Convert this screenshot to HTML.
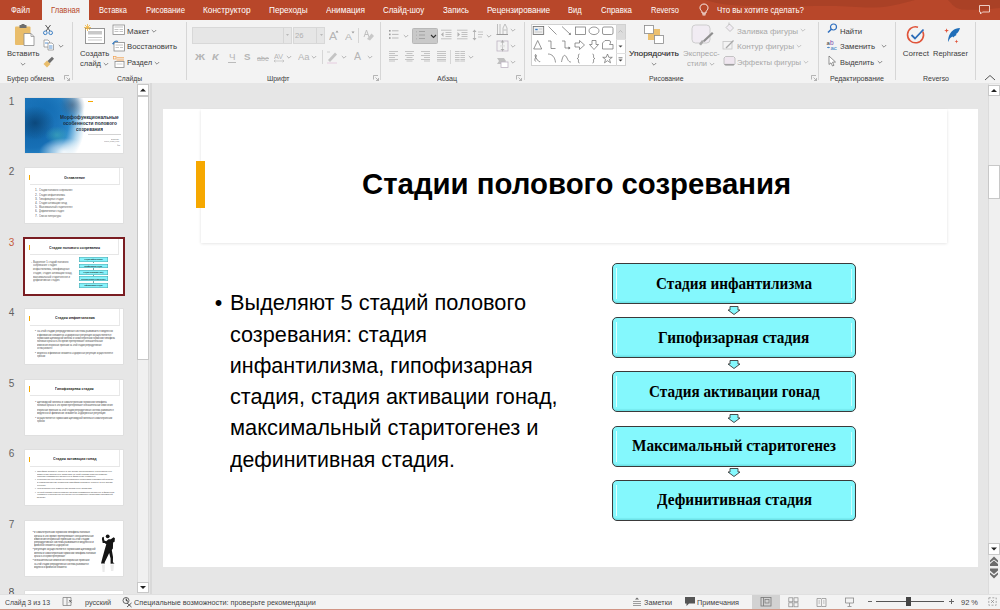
<!DOCTYPE html>
<html><head><meta charset="utf-8">
<style>
*{margin:0;padding:0;box-sizing:border-box}
html,body{width:1000px;height:610px;overflow:hidden;background:#e6e6e6;font-family:"Liberation Sans",sans-serif}
.a{position:absolute}
.t{position:absolute;white-space:pre;line-height:1;transform-origin:0 0}
svg{position:absolute;overflow:visible}
.sep{position:absolute;width:1px;background:#d6d6d6}
.thumb{position:absolute;left:25px;width:98px;height:55px;background:#fff;box-shadow:0 0 0 0.5px #d8d8d8}
.tn{position:absolute;left:8px;font-size:10.5px;color:#505050;line-height:1}
.box{position:absolute;left:612.3px;width:243.5px;height:41px;border:1.1px solid #3a3a3a;border-radius:5px;background:#84f8fd}
.box{box-shadow:inset 0 -1.5px 1px rgba(0,120,130,0.18)}
.box:before{content:"";position:absolute;left:3px;top:4px;width:1.2px;bottom:4px;background:#e0ffff}
.box:after{content:"";position:absolute;right:3px;top:5px;width:1px;bottom:5px;background:#c8ffff}
</style></head><body>
<!-- TAB BAR -->
<div class="a" style="left:0;top:0;width:1000px;height:20px;background:#b8472a"></div>
<svg style="left:0;top:0" width="1000" height="20"><path d="M705 0 C715 3 725 5 745 6 C770 7 800 6 830 6 C850 6 860 8 875 7.5 C890 7 900 4 915 0Z" fill="#8f3720" opacity="0.35"/><path d="M948 0 C952 4 955 9 962 9.5 C975 10.5 990 9 1000 8 V0Z" fill="#8f3720" opacity="0.35"/></svg>
<div class="a" style="left:42px;top:0;width:47px;height:20px;background:#f3f3f3"></div>
<!-- RIBBON -->
<div class="a" style="left:0;top:20px;width:1000px;height:63px;background:#f3f3f3"></div>
<div class="sep" style="left:72px;top:22px;height:58px"></div>
<div class="sep" style="left:186px;top:22px;height:58px"></div>
<div class="sep" style="left:380px;top:22px;height:58px"></div>
<div class="sep" style="left:524px;top:22px;height:58px"></div>
<div class="sep" style="left:818px;top:22px;height:58px"></div>
<div class="sep" style="left:895px;top:22px;height:58px"></div>
<div class="sep" style="left:975px;top:22px;height:58px"></div>
<svg style="left:699px;top:3px" width="10" height="12" viewBox="0 0 10 12"><path d="M5 1 C2.6 1 1 2.8 1 4.8 C1 6.4 2 7.3 2.8 8.2 L3 10 H7 L7.2 8.2 C8 7.3 9 6.4 9 4.8 C9 2.8 7.4 1 5 1Z" fill="none" stroke="#fff" stroke-width="0.9"/><path d="M3.2 11 H6.8 M3.6 12 H6.4" stroke="#fff" stroke-width="0.8"/></svg>
<svg style="left:978px;top:4px" width="13" height="11" viewBox="0 0 13 11"><path d="M1.5 1.5 H11.5 V8 H4.5 L2.5 10 V8 H1.5Z" fill="none" stroke="#f4dcd5" stroke-width="0.9"/></svg>
<svg style="left:14px;top:24px" width="22" height="23" viewBox="0 0 22 23"><rect x="1" y="2.5" width="15.5" height="18.5" rx="1" fill="#e9bd6b"/><rect x="5.5" y="1" width="7" height="3" rx="0.6" fill="#6e6e6e"/><rect x="7.5" y="0" width="3" height="2" fill="#6e6e6e"/><path d="M10 9.5 H17 L20 12.5 V21.5 H10Z" fill="#fff" stroke="#8a8a8a" stroke-width="0.8"/><path d="M17 9.5 V12.5 H20" fill="none" stroke="#8a8a8a" stroke-width="0.7"/></svg>
<svg style="left:20px;top:62px" width="6" height="4"><path d="M0.8 1 L3 3.2 L5.2 1" fill="none" stroke="#777" stroke-width="0.85"/></svg>
<svg style="left:42px;top:24px" width="12" height="12" viewBox="0 0 12 12"><path d="M3.5 1 L8 7 M8.5 1 L4 7" stroke="#555" stroke-width="1"/><circle cx="3.3" cy="8.8" r="1.8" fill="none" stroke="#3b7fc4" stroke-width="1"/><circle cx="8.7" cy="8.8" r="1.8" fill="none" stroke="#3b7fc4" stroke-width="1"/></svg>
<svg style="left:43px;top:39px" width="12" height="12" viewBox="0 0 12 12"><path d="M1 1 H5 L6.5 2.5 V8 H1Z" fill="#fff" stroke="#888" stroke-width="0.7"/><path d="M5 4 H9 L10.5 5.5 V11 H5Z" fill="#fff" stroke="#888" stroke-width="0.7"/><path d="M2 4 H5 M6 7 H9.5 M6 9 H9.5" stroke="#4a8ad0" stroke-width="0.9"/></svg>
<svg style="left:58px;top:44px" width="6" height="4"><path d="M0.8 1 L3 3.2 L5.2 1" fill="none" stroke="#777" stroke-width="0.85"/></svg>
<svg style="left:42px;top:56px" width="13" height="12" viewBox="0 0 13 12"><path d="M1.5 8 L5 4.5 L8.5 8 L5 11.5Z" fill="#e9bd6b"/><path d="M5.5 5 L10 0.8 L12 2.8 L7.8 7.3Z" fill="#6e6e6e"/></svg>
<svg style="left:64px;top:75px" width="7" height="6" viewBox="0 0 7 6"><path d="M0.5 4.5 V0.5 H5" fill="none" stroke="#999" stroke-width="0.7"/><path d="M2.5 2.5 L5.5 5.5 M5.5 3 V5.5 H3" fill="none" stroke="#999" stroke-width="0.7"/></svg>
<svg style="left:373px;top:75px" width="7" height="6" viewBox="0 0 7 6"><path d="M0.5 4.5 V0.5 H5" fill="none" stroke="#999" stroke-width="0.7"/><path d="M2.5 2.5 L5.5 5.5 M5.5 3 V5.5 H3" fill="none" stroke="#999" stroke-width="0.7"/></svg>
<svg style="left:516px;top:75px" width="7" height="6" viewBox="0 0 7 6"><path d="M0.5 4.5 V0.5 H5" fill="none" stroke="#999" stroke-width="0.7"/><path d="M2.5 2.5 L5.5 5.5 M5.5 3 V5.5 H3" fill="none" stroke="#999" stroke-width="0.7"/></svg>
<svg style="left:811px;top:75px" width="7" height="6" viewBox="0 0 7 6"><path d="M0.5 4.5 V0.5 H5" fill="none" stroke="#999" stroke-width="0.7"/><path d="M2.5 2.5 L5.5 5.5 M5.5 3 V5.5 H3" fill="none" stroke="#999" stroke-width="0.7"/></svg>
<svg style="left:83px;top:23px" width="23" height="21" viewBox="0 0 23 21"><rect x="2.5" y="5.5" width="19" height="15" fill="#fff" stroke="#8a8a8a" stroke-width="0.9"/><rect x="5" y="8" width="14" height="3.5" fill="#c8c8c8"/><path d="M5 14.5 H19 M5 17 H19" stroke="#bbb" stroke-width="0.8"/><path d="M4.5 1 V8 M1 4.5 H8 M2 2 L7 7 M7 2 L2 7" stroke="#f0b43c" stroke-width="0.8"/></svg>
<svg style="left:103px;top:62px" width="6" height="4"><path d="M0.8 1 L3 3.2 L5.2 1" fill="none" stroke="#777" stroke-width="0.85"/></svg>
<svg style="left:112px;top:24px" width="14" height="12" viewBox="0 0 14 12"><rect x="1" y="1" width="11.5" height="9.5" fill="#fff" stroke="#8a8a8a" stroke-width="0.8"/><path d="M2.5 3 H11 M2.5 5.5 H6.5 M7.5 5.5 H11 M2.5 7.5 H6.5 M7.5 7.5 H11" stroke="#c4c4c4" stroke-width="1"/></svg>
<svg style="left:112px;top:40px" width="14" height="12" viewBox="0 0 14 12"><rect x="2" y="2.5" width="10.5" height="8.5" fill="#fff" stroke="#8a8a8a" stroke-width="0.8"/><path d="M3.5 5 H11 M3.5 7.5 H7 M8 7.5 H11" stroke="#c4c4c4" stroke-width="1"/><path d="M1 4 C1.5 1.5 4 0.5 6 1.5" fill="none" stroke="#3b7fc4" stroke-width="1.1"/><path d="M0 3 L1.2 5 L2.6 3Z" fill="#3b7fc4"/></svg>
<svg style="left:113px;top:56px" width="13" height="12" viewBox="0 0 13 12"><rect x="0.5" y="0.5" width="2.5" height="2.5" fill="none" stroke="#f0a050" stroke-width="0.7"/><path d="M3.5 1.8 H11 M3.5 4 H11" stroke="#f0a050" stroke-width="0.9"/><rect x="2" y="5.5" width="9" height="6" fill="#fff" stroke="#8a8a8a" stroke-width="0.8"/><path d="M3.5 8 H9.5" stroke="#c4c4c4" stroke-width="0.8"/></svg>
<svg style="left:151px;top:29px" width="6" height="4"><path d="M0.8 1 L3 3.2 L5.2 1" fill="none" stroke="#777" stroke-width="0.85"/></svg>
<svg style="left:154px;top:61px" width="6" height="4"><path d="M0.8 1 L3 3.2 L5.2 1" fill="none" stroke="#777" stroke-width="0.85"/></svg>
<div class="a" style="left:192px;top:27px;width:99.5px;height:16.5px;background:#e6e6e6;border:1px solid #d8d8d8"></div>
<div class="a" style="left:283px;top:28px;width:1px;height:14.5px;background:#d6d6d6"></div>
<div class="a" style="left:293px;top:27px;width:31.5px;height:16.5px;background:#e6e6e6;border:1px solid #d8d8d8"></div>
<div class="a" style="left:316px;top:28px;width:1px;height:14.5px;background:#d6d6d6"></div>
<svg style="left:285px;top:33px" width="5" height="4" viewBox="0 0 5 4"><path d="M1 1.2 L2.5 2.8 L4 1.2Z" fill="#aaa"/></svg>
<svg style="left:318.5px;top:33px" width="5" height="4" viewBox="0 0 5 4"><path d="M1 1.2 L2.5 2.8 L4 1.2Z" fill="#aaa"/></svg>
<svg style="left:335px;top:30px" width="4" height="3" viewBox="0 0 4 3"><path d="M0.5 2.5 L2 0.5 L3.5 2.5Z" fill="#999"/></svg>
<svg style="left:350.5px;top:30.5px" width="4" height="3" viewBox="0 0 4 3"><path d="M0.5 0.5 L2 2.5 L3.5 0.5Z" fill="#999"/></svg>
<div class="sep" style="left:358px;top:28px;height:15px"></div>
<svg style="left:363px;top:29px" width="11" height="12" viewBox="0 0 11 12"><path d="M1 8 L3.5 1 L6 8 M2 5.5 H5" fill="none" stroke="#bbb" stroke-width="0.9"/><path d="M4 10 L8.5 4.5 L11 7 L7 11.5Z" fill="#c8c8c8"/></svg>
<div class="a" style="left:228px;top:62px;width:8px;height:0.8px;background:#bbb"></div>
<div class="a" style="left:256.5px;top:57.5px;width:12px;height:0.8px;background:#bbb"></div>
<svg style="left:273px;top:59px" width="12" height="4" viewBox="0 0 12 4"><path d="M1 2 H11 M1 2 L2.5 0.8 M1 2 L2.5 3.2 M11 2 L9.5 0.8 M11 2 L9.5 3.2" fill="none" stroke="#bbb" stroke-width="0.7"/></svg>
<svg style="left:286px;top:55px" width="6" height="4"><path d="M0.8 1 L3 3.2 L5.2 1" fill="none" stroke="#aaa" stroke-width="0.85"/></svg>
<svg style="left:311px;top:55px" width="6" height="4"><path d="M0.8 1 L3 3.2 L5.2 1" fill="none" stroke="#aaa" stroke-width="0.85"/></svg>
<div class="sep" style="left:322px;top:50px;height:14px"></div>
<svg style="left:326px;top:51px" width="12" height="13" viewBox="0 0 12 13"><path d="M1 1 H4" stroke="#bbb" stroke-width="0.6"/><path d="M2 9 L9 1.5 L11 3.5 L4 11Z" fill="#c4c4c4"/><path d="M1 12 H11" stroke="#e6cde0" stroke-width="1"/></svg>
<svg style="left:341px;top:55px" width="6" height="4"><path d="M0.8 1 L3 3.2 L5.2 1" fill="none" stroke="#aaa" stroke-width="0.85"/></svg>
<svg style="left:367px;top:55px" width="6" height="4"><path d="M0.8 1 L3 3.2 L5.2 1" fill="none" stroke="#aaa" stroke-width="0.85"/></svg>
<svg style="left:388px;top:29px" width="12" height="11" viewBox="0 0 12 11"><rect x="1" y="1" width="1.6" height="1.6" fill="#999"/><rect x="1" y="4.6" width="1.6" height="1.6" fill="#999"/><rect x="1" y="8.2" width="1.6" height="1.6" fill="#999"/><path d="M4 1.8 H10.5 M4 5.4 H10.5 M4 9 H10.5" stroke="#aaa" stroke-width="0.8"/></svg>
<svg style="left:403px;top:34px" width="6" height="4"><path d="M0.8 1 L3 3.2 L5.2 1" fill="none" stroke="#aaa" stroke-width="0.85"/></svg>
<div class="a" style="left:412.3px;top:28px;width:25.4px;height:15.8px;background:#c9c9c9;border:1px solid #b8b8b8;border-radius:1.5px"></div>
<svg style="left:415px;top:29px" width="12" height="12" viewBox="0 0 12 12"><path d="M1.5 2 V3.5 M1.5 5.5 V7 M1.5 9 V10.5" stroke="#aaa" stroke-width="0.6"/><path d="M4 2.5 H10 M4 6 H10 M4 9.5 H10" stroke="#999" stroke-width="0.8"/></svg>
<svg style="left:429.5px;top:34px" width="7" height="5" viewBox="0 0 7 5"><path d="M1 1 L3.5 3.5 L6 1" fill="none" stroke="#333" stroke-width="1.1"/></svg>
<svg style="left:440px;top:29px" width="13" height="12" viewBox="0 0 13 12"><path d="M1 1.2 H11.5 M5.5 3.5 H11.5 M5.5 5.5 H11.5 M5.5 7.5 H11.5 M1 9.8 H11.5" stroke="#b4b4b4" stroke-width="0.8"/><path d="M1 5.5 L3.5 3 V8Z" fill="#b0b0b0"/></svg>
<svg style="left:456px;top:29px" width="13" height="12" viewBox="0 0 13 12"><path d="M1 1.2 H11.5 M5.5 3.5 H11.5 M5.5 5.5 H11.5 M5.5 7.5 H11.5 M1 9.8 H11.5" stroke="#b4b4b4" stroke-width="0.8"/><path d="M4 5.5 L1.5 3 V8Z" fill="#b0b0b0"/></svg>
<svg style="left:472px;top:29px" width="13" height="12" viewBox="0 0 13 12"><path d="M2.5 2 V10" stroke="#b0b0b0" stroke-width="0.8"/><path d="M0.5 3 L2.5 0.5 L4.5 3Z M0.5 9 L2.5 11.5 L4.5 9Z" fill="#b0b0b0"/><path d="M6 3 H11 M6 5.5 H11 M6 8 H10" stroke="#b4b4b4" stroke-width="0.7"/></svg>
<svg style="left:486px;top:34px" width="6" height="4"><path d="M0.8 1 L3 3.2 L5.2 1" fill="none" stroke="#aaa" stroke-width="0.85"/></svg>
<svg style="left:496px;top:23px" width="13" height="13" viewBox="0 0 13 13"><path d="M1.5 1 V12 M4 1 V12 M7 12 V5 L9 1 L11 5 V12 M7.5 7 H10.5" fill="none" stroke="#b0b0b0" stroke-width="0.8"/><path d="M0.5 11.5 H12" stroke="#999" stroke-width="1"/></svg>
<svg style="left:510px;top:28px" width="6" height="4"><path d="M0.8 1 L3 3.2 L5.2 1" fill="none" stroke="#aaa" stroke-width="0.85"/></svg>
<svg style="left:496px;top:40px" width="13" height="12" viewBox="0 0 13 12"><rect x="1" y="1" width="11" height="10" fill="none" stroke="#bdb3c2" stroke-width="0.8"/><path d="M6.5 0 V11.5" stroke="#aaa" stroke-width="0.6"/><path d="M4.5 2.5 L6.5 0.5 L8.5 2.5Z M4.5 9 L6.5 11 L8.5 9Z" fill="#aaa"/><path d="M4 5.5 H9 M4 6.7 H9" stroke="#ddd" stroke-width="0.7"/></svg>
<svg style="left:510px;top:44px" width="6" height="4"><path d="M0.8 1 L3 3.2 L5.2 1" fill="none" stroke="#aaa" stroke-width="0.85"/></svg>
<svg style="left:496px;top:57px" width="13" height="11" viewBox="0 0 13 11"><path d="M1 1 H8 L10 4 L8 7 H1 L3 4Z" fill="#c0c0c0"/><rect x="5" y="5" width="7" height="5.5" fill="#fff" stroke="#bdb3c2" stroke-width="0.8"/></svg>
<svg style="left:510px;top:60px" width="6" height="4"><path d="M0.8 1 L3 3.2 L5.2 1" fill="none" stroke="#aaa" stroke-width="0.85"/></svg>
<svg style="left:388px;top:50px" width="11" height="12" viewBox="0 0 11 12"><path d="M1 1.5 H10 M1 3.5 H7 M1 5.5 H10 M1 7.5 H7 M1 9.5 H10 M1 11 H7" stroke="#b8b8b8" stroke-width="0.8"/></svg>
<svg style="left:404px;top:50px" width="11" height="12" viewBox="0 0 11 12"><path d="M1 1.5 H10 M2.5 3.5 H8.5 M1 5.5 H10 M2.5 7.5 H8.5 M1 9.5 H10 M2.5 11 H8.5" stroke="#b8b8b8" stroke-width="0.8"/></svg>
<svg style="left:420px;top:50px" width="11" height="12" viewBox="0 0 11 12"><path d="M1 1.5 H10 M4 3.5 H10 M1 5.5 H10 M4 7.5 H10 M1 9.5 H10 M4 11 H10" stroke="#b8b8b8" stroke-width="0.8"/></svg>
<svg style="left:435.5px;top:50px" width="11" height="12" viewBox="0 0 11 12"><path d="M1 1.5 H10 M1 3.5 H10 M1 5.5 H10 M1 7.5 H10 M1 9.5 H10 M1 11 H10" stroke="#b8b8b8" stroke-width="0.8"/></svg>
<div class="sep" style="left:450px;top:50px;height:14px"></div>
<svg style="left:454px;top:50px" width="12" height="12" viewBox="0 0 12 12"><path d="M1 1.5 H11 M1 3.5 H11 M1 5.5 H11 M1 7.5 H11 M1 9.5 H11 M1 11 H11" stroke="#b8b8b8" stroke-width="0.8"/><path d="M6 1 V11.5" stroke="#f3f3f3" stroke-width="0.8"/></svg>
<svg style="left:468px;top:55px" width="6" height="4"><path d="M0.8 1 L3 3.2 L5.2 1" fill="none" stroke="#aaa" stroke-width="0.85"/></svg>
<div class="a" style="left:530.5px;top:23.5px;width:95.5px;height:42.5px;background:#fff;border:1px solid #d0d0d0"></div>
<div class="a" style="left:615.5px;top:24.5px;width:9.5px;height:14px;background:#dcdcdc"></div>
<div class="a" style="left:615.5px;top:24px;width:1px;height:41.5px;background:#d6d6d6"></div>
<div class="a" style="left:616px;top:38.5px;width:9.5px;height:1px;background:#e0e0e0"></div>
<div class="a" style="left:616px;top:52.5px;width:9.5px;height:1px;background:#e0e0e0"></div>
<svg style="left:617px;top:29px" width="7" height="5" viewBox="0 0 7 5"><path d="M1.5 3.5 L3.5 1.5 L5.5 3.5" fill="none" stroke="#aaa" stroke-width="0.6"/></svg>
<svg style="left:617px;top:44px" width="7" height="5" viewBox="0 0 7 5"><path d="M1.5 1.5 L3.5 3.5 L5.5 1.5Z" fill="#444"/></svg>
<svg style="left:617px;top:57px" width="7" height="6" viewBox="0 0 7 6"><path d="M1.5 0.8 H5.5" stroke="#444" stroke-width="0.7"/><path d="M1.5 2.5 L3.5 4.5 L5.5 2.5Z" fill="#444"/></svg>
<svg style="left:532px;top:25px" width="92" height="40" viewBox="0 0 92 40">
<g transform="translate(-0.8,0)"><rect x="2" y="1.5" width="10.5" height="8" fill="#f0f0f0" stroke="#6a6a6a" stroke-width="0.8"/><path d="M4 4.5 H6.5" stroke="#3b7fc4" stroke-width="1.4"/><path d="M7.5 4 H11 M3.5 7 H11" stroke="#bbb" stroke-width="0.8"/></g>
<g transform="translate(0,0)"><path d="M16.5 1.5 L24.5 9.5" stroke="#6a6a6a" stroke-width="0.7"/></g>
<g transform="translate(0,0)"><path d="M30 1.5 L38.5 9.5" stroke="#6a6a6a" stroke-width="0.7"/><path d="M36.5 9.8 L38.8 9.8 L38.5 7.6Z" fill="#6a6a6a"/></g>
<g transform="translate(-1.5,0)"><rect x="45" y="2" width="10" height="7.5" fill="none" stroke="#6a6a6a" stroke-width="0.7"/></g>
<g transform="translate(-1.5,0)"><ellipse cx="63.5" cy="5.8" rx="5" ry="3.8" fill="none" stroke="#6a6a6a" stroke-width="0.7"/></g>
<g transform="translate(-1.5,0)"><rect x="72" y="2" width="10.5" height="7.5" rx="1.5" fill="none" stroke="#6a6a6a" stroke-width="0.7"/></g>
<g transform="translate(-0.8,1)"><path d="M6.5 14.5 L10.5 23 H2.5Z" fill="none" stroke="#6a6a6a" stroke-width="0.7"/></g>
<g transform="translate(0,1)"><path d="M16 15 H19 V22.5 H23.5" fill="none" stroke="#6a6a6a" stroke-width="0.7"/></g>
<g transform="translate(0,1)"><path d="M30 15 H33 V22 H37.5" fill="none" stroke="#6a6a6a" stroke-width="0.7"/><path d="M36.5 20.5 L38.5 22 L36.5 23.5Z" fill="#6a6a6a"/></g>
<g transform="translate(-1.5,1)"><path d="M44.5 17 H49 V14.5 L54 19 L49 23.5 V21 H44.5Z" fill="none" stroke="#6a6a6a" stroke-width="0.7"/></g>
<g transform="translate(-1.5,1)"><path d="M61.5 14.5 H65.5 V18.5 H68 L63.5 23.5 L59 18.5 H61.5Z" fill="none" stroke="#6a6a6a" stroke-width="0.7"/></g>
<g transform="translate(-1.5,1)"><path d="M72 17 L74.5 14.5 H78.5 C80.5 14.5 80.5 17 79 18.5 H82.5 V23 H72Z" fill="none" stroke="#6a6a6a" stroke-width="0.7"/></g>
<g transform="translate(-0.8,1)"><path d="M4.5 35.5 C2 33 6 31 5 29 C4 27.5 3 30 5.5 33 C7 35 8 36 9 35.5" fill="none" stroke="#6a6a6a" stroke-width="0.8"/></g>
<g transform="translate(0,1)"><path d="M16 28 C20 28 23 31 23.5 36.5" fill="none" stroke="#6a6a6a" stroke-width="0.7"/></g>
<g transform="translate(0,1)"><path d="M29.5 36 C31 28 33 28 35 32 C36.5 35.5 37.5 36 39 36" fill="none" stroke="#6a6a6a" stroke-width="0.7"/></g>
<g transform="translate(-1.5,1)"><path d="M49 28 C47.5 28 48 30 48 31 C48 32 47 32.5 46.5 32.5 C47 32.5 48 33 48 34 C48 35 47.5 37 49 37" fill="none" stroke="#6a6a6a" stroke-width="0.7"/></g>
<g transform="translate(-1.5,1)"><path d="M62 28 C63.5 28 63 30 63 31 C63 32 64 32.5 64.5 32.5 C64 32.5 63 33 63 34 C63 35 63.5 37 62 37" fill="none" stroke="#6a6a6a" stroke-width="0.7"/></g>
<g transform="translate(-1.5,1)"><path d="M77 28 L78.3 31.3 L81.8 31.3 L79 33.4 L80 36.8 L77 34.7 L74 36.8 L75 33.4 L72.2 31.3 L75.7 31.3Z" fill="none" stroke="#6a6a6a" stroke-width="0.7"/></g>
</svg>
<svg style="left:643px;top:24px" width="22" height="21" viewBox="0 0 22 21"><rect x="5" y="5" width="12" height="11" fill="#ecc06f"/><rect x="1.5" y="1.5" width="9" height="8" fill="#fff" stroke="#8a8a8a" stroke-width="0.8"/><rect x="11.5" y="11.5" width="9" height="8" fill="#fff" stroke="#8a8a8a" stroke-width="0.8"/></svg>
<svg style="left:651px;top:62px" width="6" height="4"><path d="M0.8 1 L3 3.2 L5.2 1" fill="none" stroke="#777" stroke-width="0.85"/></svg>
<svg style="left:690px;top:24px" width="25" height="22" viewBox="0 0 25 22"><rect x="2" y="1" width="18" height="18" rx="3.5" fill="#f1ecf3" stroke="#c9c9c9" stroke-width="0.9"/><path d="M9 20 L12 16 L14 17.5 L11 21.5Z" fill="#a8a8a8"/><path d="M13 16.5 L22 8 L23.5 9.5 L14.5 18Z" fill="#8e8e8e"/></svg>
<svg style="left:709px;top:62px" width="6" height="4"><path d="M0.8 1 L3 3.2 L5.2 1" fill="none" stroke="#aaa" stroke-width="0.85"/></svg>
<svg style="left:724px;top:22px" width="12" height="11" viewBox="0 0 12 11"><path d="M2 5.5 L5.5 2 L9.5 6 L6 9.5Z" fill="#f1ecf3" stroke="#b8b8b8" stroke-width="0.8"/><path d="M5 0.5 V3" stroke="#b8b8b8" stroke-width="0.8"/></svg>
<svg style="left:722px;top:39px" width="13" height="11" viewBox="0 0 13 11"><rect x="1" y="2.5" width="9" height="7.5" fill="none" stroke="#c4c4c4" stroke-width="0.8"/><path d="M4 9 L11.5 1.5" stroke="#a8a8a8" stroke-width="1.3"/></svg>
<svg style="left:723px;top:55px" width="13" height="11" viewBox="0 0 13 11"><path d="M2.5 1.5 H10.5 L12 3 V9 L10.5 10.5 H2.5 L1 9 V3Z" fill="#efe6ef" stroke="#b8b8b8" stroke-width="0.8"/><path d="M1.5 9.5 H11" stroke="#a0a0a0" stroke-width="1.2"/></svg>
<svg style="left:800px;top:28px" width="6" height="4"><path d="M0.8 1 L3 3.2 L5.2 1" fill="none" stroke="#bbb" stroke-width="0.85"/></svg>
<svg style="left:796px;top:44px" width="6" height="4"><path d="M0.8 1 L3 3.2 L5.2 1" fill="none" stroke="#bbb" stroke-width="0.85"/></svg>
<svg style="left:803px;top:60px" width="6" height="4"><path d="M0.8 1 L3 3.2 L5.2 1" fill="none" stroke="#bbb" stroke-width="0.85"/></svg>
<svg style="left:827px;top:23px" width="11" height="11" viewBox="0 0 11 11"><circle cx="6.5" cy="4" r="3" fill="none" stroke="#2f6fbf" stroke-width="1.2"/><path d="M4.3 6.2 L1 9.5" stroke="#2f6fbf" stroke-width="1.5"/></svg>
<svg style="left:826px;top:39px" width="12" height="12" viewBox="0 0 12 12"><text x="0.5" y="5.5" font-size="6" font-family="Liberation Sans" fill="#333">a</text><text x="4" y="5.5" font-size="6.5" font-family="Liberation Sans" fill="#7a4fb0">b</text><text x="4.5" y="11" font-size="6" font-family="Liberation Sans" fill="#3b7fc4">ac</text><path d="M1 8.5 L3.5 8.5" stroke="#3b7fc4" stroke-width="0.8"/><path d="M2.5 7.5 L3.8 8.5 L2.5 9.5Z" fill="#3b7fc4"/></svg>
<svg style="left:881px;top:44px" width="6" height="4"><path d="M0.8 1 L3 3.2 L5.2 1" fill="none" stroke="#777" stroke-width="0.85"/></svg>
<svg style="left:828px;top:55px" width="9" height="12" viewBox="0 0 9 12"><path d="M1 1 L1 9.5 L3 7.8 L4.5 11 L6 10.3 L4.5 7.2 L7.5 7Z" fill="#fff" stroke="#666" stroke-width="0.7"/></svg>
<svg style="left:877px;top:60px" width="6" height="4"><path d="M0.8 1 L3 3.2 L5.2 1" fill="none" stroke="#777" stroke-width="0.85"/></svg>
<svg style="left:906px;top:25px" width="21" height="20" viewBox="0 0 21 20"><path d="M16.8 6.5 A8 8 0 1 1 12 2.2" fill="none" stroke="#e0543a" stroke-width="1.6"/><path d="M5.5 10 L9 13.5 L17.5 4.5" fill="none" stroke="#2b6cb8" stroke-width="1.8"/></svg>
<svg style="left:943px;top:26px" width="20" height="19" viewBox="0 0 20 19"><path d="M17 2 C11 2 7 6 5.5 11.5 C5 13.5 5 15 5.3 16 C6 13 8 11 9.5 10.5 L10.3 11.5 C11.5 10 12.5 9.5 13.5 9 L13 8 C15 7 16.5 4.5 17 2Z" fill="#1f6eb9"/><path d="M3 4 L3.6 2.2 L4.2 4 L6 4.6 L4.2 5.2 L3.6 7 L3 5.2 L1.2 4.6Z" fill="#e0543a"/><path d="M13 15 L13.5 13.6 L14 15 L15.4 15.5 L14 16 L13.5 17.4 L13 16 L11.6 15.5Z" fill="#e0543a"/></svg>
<svg style="left:984px;top:74px" width="12" height="7" viewBox="0 0 12 7"><path d="M1 6 L6 1.5 L11 6" fill="none" stroke="#555" stroke-width="1"/></svg>
<!-- MAIN -->
<div class="a" style="left:150px;top:83px;width:2px;height:511px;background:#d9d9d9"></div>
<!-- thumbs scrollbar -->
<div class="a" style="left:137px;top:84px;width:11.5px;height:509px;background:#f0f0f0;border-left:1px solid #dcdcdc;border-right:1px solid #dcdcdc"></div>
<div class="a" style="left:137px;top:84px;width:11.5px;height:12px;background:#fff;border:1px solid #c8c8c8"></div>
<svg style="left:137px;top:84px" width="12" height="12"><path d="M3 7.5 L6 4.5 L9 7.5Z" fill="#222"/></svg>
<div class="a" style="left:137px;top:96px;width:11.5px;height:264px;background:#fff;border:1px solid #c8c8c8"></div>
<div class="a" style="left:137px;top:582px;width:11.5px;height:11px;background:#fff;border:1px solid #c8c8c8"></div>
<svg style="left:137px;top:582px" width="12" height="11"><path d="M3 4 L6 7 L9 4Z" fill="#222"/></svg>
<div class="thumb" style="top:97.50px;height:55.00px"></div>
<div class="thumb" style="top:168.00px;height:55.00px"></div>
<div class="thumb" style="top:238.50px;height:55.00px"></div>
<div class="thumb" style="top:309.00px;height:55.00px"></div>
<div class="thumb" style="top:379.50px;height:55.00px"></div>
<div class="thumb" style="top:450.00px;height:55.00px"></div>
<div class="thumb" style="top:520.50px;height:55.00px"></div>
<div class="thumb" style="top:591.00px;height:3.00px"></div>
<div class="a" style="left:8.6px;top:586px;width:10px;height:8px;overflow:hidden"><div class="t" style="left:0;top:1px;font-size:10.5px;color:#555">8</div></div>
<div class="a" style="left:25px;top:97.5px;width:98px;height:55px;overflow:hidden">
<div class="a" style="left:-45px;top:-30px;width:105px;height:110px;background:radial-gradient(ellipse 50% 50% at 50% 50%,#0e62a6 0%,#176fb5 45%,#2c8acb 68%,rgba(120,185,225,0.6) 86%,rgba(255,255,255,0) 100%)"></div>
<div class="a" style="left:-20px;top:-20px;width:80px;height:60px;background:radial-gradient(ellipse 50% 50% at 50% 50%,rgba(20,110,180,0.9) 0%,rgba(30,120,190,0.6) 60%,rgba(255,255,255,0) 100%)"></div>
<div class="a" style="left:-10px;top:8px;width:40px;height:34px;background:radial-gradient(ellipse 50% 50% at 50% 50%,rgba(6,55,100,0.7) 0%,rgba(6,55,100,0) 100%)"></div>
<div class="a" style="left:20px;top:28px;width:24px;height:18px;background:radial-gradient(ellipse 50% 50% at 50% 50%,rgba(60,165,185,0.75) 0%,rgba(60,165,185,0) 100%)"></div>
<div class="a" style="left:34px;top:-6px;width:26px;height:26px;background:radial-gradient(ellipse 50% 50% at 50% 50%,rgba(70,80,100,0.5) 0%,rgba(70,80,100,0) 100%)"></div>
<div class="a" style="left:14px;top:40px;width:50px;height:28px;background:radial-gradient(ellipse 50% 50% at 50% 50%,rgba(255,255,255,0.9) 0%,rgba(255,255,255,0.5) 50%,rgba(255,255,255,0) 100%)"></div>
</div>
<div class="a" style="left:88px;top:100.8px;width:4.5px;height:1px;background:#f6a800"></div>
<div class="a" style="left:87.7px;top:134.1px;width:33px;height:1.3px;background:#d3d3d3"></div>
<div class="a" style="left:29.5px;top:168.00px;width:90px;height:16.5px;border-right:0.6px solid #e8e8e8;border-bottom:0.6px solid #e6e6e6"></div>
<div class="a" style="left:29.2px;top:174.60px;width:1.2px;height:5.5px;background:#f6a800"></div>
<div class="a" style="left:23px;top:236.5px;width:102px;height:59px;border:2px solid #7a1d22"></div>
<div class="a" style="left:29.50px;top:238.50px;width:89.58px;height:16.08px;border-right:0.6px solid #e8e8e8;border-bottom:0.6px solid #e6e6e6"></div>
<div class="a" style="left:28.96px;top:244.74px;width:1.1px;height:5.64px;background:#f6a800"></div>
<div class="a" style="left:78.92px;top:257.02px;width:29.22px;height:4.92px;background:#86f2fa;box-shadow:inset 0 0 0 0.5px rgba(40,110,120,0.6)"></div>
<div class="a" style="left:93.22px;top:261.94px;width:0.6px;height:1.56px;background:#7aa"></div>
<div class="a" style="left:78.92px;top:263.51px;width:29.22px;height:4.92px;background:#86f2fa;box-shadow:inset 0 0 0 0.5px rgba(40,110,120,0.6)"></div>
<div class="a" style="left:93.22px;top:268.43px;width:0.6px;height:1.56px;background:#7aa"></div>
<div class="a" style="left:78.92px;top:270.00px;width:29.22px;height:4.92px;background:#86f2fa;box-shadow:inset 0 0 0 0.5px rgba(40,110,120,0.6)"></div>
<div class="a" style="left:93.22px;top:274.92px;width:0.6px;height:1.56px;background:#7aa"></div>
<div class="a" style="left:78.92px;top:276.48px;width:29.22px;height:4.92px;background:#86f2fa;box-shadow:inset 0 0 0 0.5px rgba(40,110,120,0.6)"></div>
<div class="a" style="left:93.22px;top:281.40px;width:0.6px;height:1.56px;background:#7aa"></div>
<div class="a" style="left:78.92px;top:282.97px;width:29.22px;height:4.92px;background:#86f2fa;box-shadow:inset 0 0 0 0.5px rgba(40,110,120,0.6)"></div>
<div class="a" style="left:29.5px;top:309.00px;width:90px;height:16.5px;border-right:0.6px solid #e8e8e8;border-bottom:0.6px solid #e6e6e6"></div>
<div class="a" style="left:29.2px;top:315.60px;width:1.2px;height:5.5px;background:#f6a800"></div>
<div class="a" style="left:29.5px;top:379.50px;width:90px;height:16.5px;border-right:0.6px solid #e8e8e8;border-bottom:0.6px solid #e6e6e6"></div>
<div class="a" style="left:29.2px;top:386.10px;width:1.2px;height:5.5px;background:#f6a800"></div>
<div class="a" style="left:29.5px;top:450.00px;width:90px;height:16.5px;border-right:0.6px solid #e8e8e8;border-bottom:0.6px solid #e6e6e6"></div>
<div class="a" style="left:29.2px;top:456.60px;width:1.2px;height:5.5px;background:#f6a800"></div>
<svg style="left:95px;top:528px" width="27" height="47" viewBox="0 0 27 47"><circle cx="12.7" cy="8.3" r="1.9" fill="#141414"/><path d="M7.3 9.3 L8.7 8.7 L9.3 12.5 L11.2 13.2 L13.5 11.3 L15.8 11.2 L18.6 9.2 L19.9 10.3 L19.6 13.8 L18.1 14.6 L17.9 20.5 L16.8 22 L18 29 L17.9 34.3 L19.6 35.6 L15.6 35.8 L15.6 30.5 L14.2 25 L11.8 30 L9.6 34.5 L10 35.6 L6 35.6 L7.4 30 L9.6 22 L11.3 16.2 L9.6 15 L7.7 14.9 L6.9 11 Z" fill="#141414"/><path d="M6.8 36.5 L10 36.5 L9.6 44 L7.6 44Z M15.3 36.5 L19 36.5 L18.3 43 L16 43Z" fill="#d0d0d0" opacity="0.45"/></svg>
<!-- SLIDE -->
<div class="a" style="left:163px;top:109px;width:815px;height:458px;background:#fff"></div>
<div class="a" style="left:200.5px;top:109px;width:746.5px;height:134px;background:#fff;box-shadow:0 0.5px 3px rgba(0,0,0,0.13)"></div>
<div class="a" style="left:196px;top:161px;width:8.7px;height:47px;background:#f6a800"></div>
<div class="box" style="top:263.30px"></div>
<svg style="left:727px;top:305.80px" width="14" height="10"><path d="M3 0.5 H11 V4 H13 L7 8.5 L1 4 H3Z" fill="#84f8fd" stroke="#3a3a3a" stroke-width="0.9"/></svg>
<div class="box" style="top:317.38px"></div>
<svg style="left:727px;top:359.88px" width="14" height="10"><path d="M3 0.5 H11 V4 H13 L7 8.5 L1 4 H3Z" fill="#84f8fd" stroke="#3a3a3a" stroke-width="0.9"/></svg>
<div class="box" style="top:371.46px"></div>
<svg style="left:727px;top:413.96px" width="14" height="10"><path d="M3 0.5 H11 V4 H13 L7 8.5 L1 4 H3Z" fill="#84f8fd" stroke="#3a3a3a" stroke-width="0.9"/></svg>
<div class="box" style="top:425.54px"></div>
<svg style="left:727px;top:468.04px" width="14" height="10"><path d="M3 0.5 H11 V4 H13 L7 8.5 L1 4 H3Z" fill="#84f8fd" stroke="#3a3a3a" stroke-width="0.9"/></svg>
<div class="box" style="top:479.62px"></div>
<!-- right scrollbar -->
<div class="a" style="left:988px;top:84px;width:12px;height:510px;background:#f0f0f0;border-left:1px solid #dcdcdc"></div>
<div class="a" style="left:988px;top:85px;width:11.5px;height:11px;background:#fff;border:1px solid #c8c8c8"></div>
<svg style="left:988px;top:85px" width="12" height="11"><path d="M3 7 L6 4 L9 7Z" fill="#222"/></svg>
<div class="a" style="left:988px;top:165px;width:11.5px;height:34px;background:#fff;border:1px solid #c8c8c8"></div>
<div class="a" style="left:988px;top:543px;width:11.5px;height:11.5px;background:#fff;border:1px solid #c8c8c8"></div>
<svg style="left:988px;top:543px" width="12" height="12"><path d="M3 4.5 L6 7.5 L9 4.5Z" fill="#222"/></svg>
<svg style="left:988px;top:555px" width="12" height="25"><path d="M6 1.5 L10 5.5 V7.5 L6 4.5 L2 7.5 V5.5Z M6 5.5 L10 9 V11 H2 V9Z" fill="#6b6b6b"/><path d="M2 13.5 H10 V15.5 L6 19 L2 15.5Z M2 17.5 L6 20.5 L10 17.5 V19.5 L6 23.5 L2 19.5Z" fill="#6b6b6b"/></svg>
<!-- STATUS -->
<div class="a" style="left:0;top:594px;width:1000px;height:16px;background:#f3f3f3;border-top:1px solid #e0e0e0"></div>
<div class="a" style="left:0;top:608.5px;width:1000px;height:1.5px;background:#b7472a;opacity:0.55"></div>
<div class="a" style="left:752px;top:595px;width:27.5px;height:13.5px;background:#d2d2d2"></div>
<svg style="left:62px;top:596px" width="12" height="11" viewBox="0 0 12 11"><path d="M1 1.5 H5 V9.5 H1Z M5 1.5 H9 V9.5 H5" fill="none" stroke="#777" stroke-width="0.7"/><path d="M7 4 L9.5 6.5 M9.5 4 L7 6.5" stroke="#555" stroke-width="0.8"/></svg>
<svg style="left:122px;top:596px" width="12" height="12" viewBox="0 0 12 12"><circle cx="4" cy="4.5" r="3" fill="none" stroke="#555" stroke-width="0.9"/><path d="M4 2.5 V4.5 L6 5.5" stroke="#555" stroke-width="0.7"/><path d="M5 7 L9.5 11 M9.5 7 L5 11" stroke="#444" stroke-width="0.9"/></svg>
<svg style="left:632px;top:597px" width="10" height="10" viewBox="0 0 10 10"><path d="M5 0.5 L7 2.5 H3Z" fill="#666"/><path d="M1 4.5 H9 M1 6.5 H9 M1 8.5 H9" stroke="#777" stroke-width="0.7"/></svg>
<svg style="left:684px;top:596px" width="12" height="11" viewBox="0 0 12 11"><path d="M1 1 H11 V7.5 H5 L2.5 10 V7.5 H1Z" fill="#555"/></svg>
<svg style="left:760px;top:597px" width="12" height="10" viewBox="0 0 12 10"><rect x="1" y="0.5" width="10" height="8.5" fill="none" stroke="#777" stroke-width="0.8"/><path d="M3.5 0.5 V9" stroke="#777" stroke-width="0.8"/><rect x="5" y="2.5" width="4" height="3.5" fill="none" stroke="#777" stroke-width="0.7"/></svg>
<svg style="left:788px;top:597px" width="11" height="11" viewBox="0 0 11 11"><rect x="0.8" y="0.8" width="4" height="4" fill="none" stroke="#888" stroke-width="0.7"/><rect x="6" y="0.8" width="4" height="4" fill="none" stroke="#888" stroke-width="0.7"/><rect x="0.8" y="5.8" width="4" height="4" fill="none" stroke="#888" stroke-width="0.7"/><rect x="6" y="5.8" width="4" height="4" fill="none" stroke="#888" stroke-width="0.7"/></svg>
<svg style="left:816px;top:597px" width="11" height="11" viewBox="0 0 11 11"><path d="M1 1.5 H5 L5.5 2 L6 1.5 H10 V9.5 H6 L5.5 10 L5 9.5 H1Z" fill="none" stroke="#888" stroke-width="0.7"/><path d="M5.5 2 V9.5 M2.5 4 H4 M2.5 6 H4 M7 4 H8.5 M7 6 H8.5" stroke="#888" stroke-width="0.6"/></svg>
<svg style="left:844px;top:597px" width="11" height="11" viewBox="0 0 11 11"><path d="M1 1 H10 M1.5 1 V6 H9.5 V1 M5.5 6 V9 M3.5 9.5 H7.5" fill="none" stroke="#888" stroke-width="0.8"/></svg>
<div class="a" style="left:868px;top:601px;width:4px;height:0.8px;background:#666"></div>
<div class="a" style="left:876px;top:600.8px;width:68px;height:1px;background:#555"></div>
<div class="a" style="left:906px;top:597px;width:4.5px;height:9px;background:#444"></div>
<div class="a" style="left:949px;top:601px;width:5px;height:0.8px;background:#666"></div><div class="a" style="left:951.1px;top:598.6px;width:0.8px;height:5px;background:#666"></div>
<svg style="left:988px;top:597px" width="9" height="9" viewBox="0 0 9 9"><rect x="0.8" y="0.8" width="7.4" height="7.4" fill="none" stroke="#888" stroke-width="0.7" stroke-dasharray="2 1.5"/><path d="M3 3 L6 6 M6 3 L3 6" stroke="#777" stroke-width="0.6"/></svg>
<div class="t" style="left:11.00px;top:6.20px;font-size:8.6px;color:#fff;transform:scaleX(0.8986)">Файл</div>
<div class="t" style="left:98.50px;top:6.20px;font-size:8.6px;color:#fff;transform:scaleX(0.8760)">Вставка</div>
<div class="t" style="left:145.50px;top:6.20px;font-size:8.6px;color:#fff;transform:scaleX(0.9004)">Рисование</div>
<div class="t" style="left:203.40px;top:6.20px;font-size:8.6px;color:#fff;transform:scaleX(0.9707)">Конструктор</div>
<div class="t" style="left:269.40px;top:6.20px;font-size:8.6px;color:#fff;transform:scaleX(0.9569)">Переходы</div>
<div class="t" style="left:326.00px;top:6.20px;font-size:8.6px;color:#fff;transform:scaleX(0.9660)">Анимация</div>
<div class="t" style="left:383.40px;top:6.20px;font-size:8.6px;color:#fff;transform:scaleX(0.9241)">Слайд-шоу</div>
<div class="t" style="left:443.00px;top:6.20px;font-size:8.6px;color:#fff;transform:scaleX(0.9214)">Запись</div>
<div class="t" style="left:487.40px;top:6.20px;font-size:8.6px;color:#fff;transform:scaleX(0.9517)">Рецензирование</div>
<div class="t" style="left:568.40px;top:6.20px;font-size:8.6px;color:#fff;transform:scaleX(0.8741)">Вид</div>
<div class="t" style="left:601.00px;top:6.20px;font-size:8.6px;color:#fff;transform:scaleX(0.9189)">Справка</div>
<div class="t" style="left:651.00px;top:6.20px;font-size:8.6px;color:#fff;transform:scaleX(0.8743)">Reverso</div>
<div class="t" style="left:717.00px;top:6.20px;font-size:8.6px;color:#fff;transform:scaleX(0.9151)">Что вы хотите сделать?</div>
<div class="t" style="left:51.00px;top:6.20px;font-size:8.6px;color:#b7472a;transform:scaleX(0.8859)">Главная</div>
<div class="t" style="left:6.90px;top:50.00px;font-size:8px;color:#3b3b3b;transform:scaleX(0.9554)">Вставить</div>
<div class="t" style="left:6.90px;top:75.00px;font-size:8px;color:#3b3b3b;transform:scaleX(0.8683)">Буфер обмена</div>
<div class="t" style="left:80.00px;top:50.00px;font-size:8px;color:#3b3b3b;transform:scaleX(0.9670)">Создать</div>
<div class="t" style="left:80.00px;top:60.00px;font-size:8px;color:#3b3b3b;transform:scaleX(0.9436)">слайд</div>
<div class="t" style="left:126.80px;top:28.00px;font-size:8px;color:#3b3b3b;transform:scaleX(0.9938)">Макет</div>
<div class="t" style="left:126.80px;top:43.00px;font-size:8px;color:#3b3b3b;transform:scaleX(0.9760)">Восстановить</div>
<div class="t" style="left:126.80px;top:59.00px;font-size:8px;color:#3b3b3b;transform:scaleX(0.9530)">Раздел</div>
<div class="t" style="left:117.00px;top:75.00px;font-size:8px;color:#3b3b3b;transform:scaleX(0.8395)">Слайды</div>
<div class="t" style="left:266.50px;top:75.00px;font-size:8px;color:#3b3b3b;transform:scaleX(0.8548)">Шрифт</div>
<div class="t" style="left:295.00px;top:32.00px;font-size:8px;color:#b0b0b0;transform:scaleX(0.9552)">26</div>
<div class="t" style="left:437.00px;top:75.00px;font-size:8px;color:#3b3b3b;transform:scaleX(0.8912)">Абзац</div>
<div class="t" style="left:629.00px;top:50.00px;font-size:8px;color:#2a2a2a;transform:scaleX(1.0503);-webkit-text-stroke:0.12px #2a2a2a">Упорядочить</div>
<div class="t" style="left:682.80px;top:50.00px;font-size:8px;color:#a8a8a8;transform:scaleX(0.9856)">Экспресс-</div>
<div class="t" style="left:687.00px;top:60.00px;font-size:8px;color:#a8a8a8;transform:scaleX(0.9403)">стили</div>
<div class="t" style="left:737.00px;top:28.00px;font-size:8px;color:#a8a8a8">Заливка фигуры</div>
<div class="t" style="left:737.00px;top:43.00px;font-size:8px;color:#a8a8a8;transform:scaleX(1.0189)">Контур фигуры</div>
<div class="t" style="left:737.00px;top:59.00px;font-size:8px;color:#a8a8a8;transform:scaleX(0.9600)">Эффекты фигуры</div>
<div class="t" style="left:648.50px;top:75.00px;font-size:8px;color:#3b3b3b;transform:scaleX(0.8563)">Рисование</div>
<div class="t" style="left:840.00px;top:28.00px;font-size:8px;color:#3b3b3b;transform:scaleX(0.9637)">Найти</div>
<div class="t" style="left:840.00px;top:43.00px;font-size:8px;color:#3b3b3b;transform:scaleX(0.9736)">Заменить</div>
<div class="t" style="left:840.00px;top:59.00px;font-size:8px;color:#3b3b3b;transform:scaleX(0.9213)">Выделить</div>
<div class="t" style="left:830.00px;top:75.00px;font-size:8px;color:#3b3b3b;transform:scaleX(0.8861)">Редактирование</div>
<div class="t" style="left:902.80px;top:50.00px;font-size:8px;color:#3b3b3b">Correct</div>
<div class="t" style="left:933.00px;top:50.00px;font-size:8px;color:#3b3b3b;transform:scaleX(0.9370)">Rephraser</div>
<div class="t" style="left:923.00px;top:75.00px;font-size:8px;color:#3b3b3b;transform:scaleX(0.8728)">Reverso</div>
<div class="t" style="left:5.00px;top:599.20px;font-size:7.6px;color:#444;transform:scaleX(0.9077)">Слайд 3 из 13</div>
<div class="t" style="left:85.00px;top:599.20px;font-size:7.6px;color:#444;transform:scaleX(0.9534)">русский</div>
<div class="t" style="left:134.00px;top:599.20px;font-size:7.6px;color:#444;transform:scaleX(0.9550)">Специальные возможности: проверьте рекомендации</div>
<div class="t" style="left:644.00px;top:599.20px;font-size:7.6px;color:#444;transform:scaleX(0.9632)">Заметки</div>
<div class="t" style="left:697.00px;top:599.20px;font-size:7.6px;color:#444;transform:scaleX(0.9572)">Примечания</div>
<div class="t" style="left:961.00px;top:599.20px;font-size:7.6px;color:#444;transform:scaleX(0.9813)">92 %</div>
<div class="t" style="left:362.40px;top:169.25px;font-size:29.5px;color:#000;font-weight:bold;transform:scaleX(0.9955)">Стадии полового созревания</div>
<div class="t" style="left:229.80px;top:292.75px;font-size:21.5px;color:#000;transform:scaleX(1.0124)">Выделяют 5 стадий полового</div>
<div class="t" style="left:229.80px;top:324.75px;font-size:21.5px;color:#000;transform:scaleX(1.0072)">созревания: стадия</div>
<div class="t" style="left:229.80px;top:355.75px;font-size:21.5px;color:#000">инфантилизма, гипофизарная</div>
<div class="t" style="left:229.80px;top:386.75px;font-size:21.5px;color:#000;transform:scaleX(1.0061)">стадия, стадия активации гонад,</div>
<div class="t" style="left:229.80px;top:417.75px;font-size:21.5px;color:#000;transform:scaleX(1.0171)">максимальный старитогенез и</div>
<div class="t" style="left:229.80px;top:449.75px;font-size:21.5px;color:#000;transform:scaleX(0.9899)">дефинитивная стадия.</div>
<div class="t" style="left:214.80px;top:292.75px;font-size:21.5px;color:#000">•</div>
<div class="t" style="left:656.00px;top:276.00px;font-size:16px;color:#000;font-family:'Liberation Serif',serif;font-weight:bold;transform:scaleX(0.9491)">Стадия инфантилизма</div>
<div class="t" style="left:658.38px;top:330.00px;font-size:16px;color:#000;font-family:'Liberation Serif',serif;font-weight:bold;transform:scaleX(0.9535)">Гипофизарная стадия</div>
<div class="t" style="left:648.62px;top:384.00px;font-size:16px;color:#000;font-family:'Liberation Serif',serif;font-weight:bold;transform:scaleX(0.9479)">Стадия активации гонад</div>
<div class="t" style="left:632.00px;top:438.00px;font-size:16px;color:#000;font-family:'Liberation Serif',serif;font-weight:bold;transform:scaleX(0.9561)">Максимальный старитогенез</div>
<div class="t" style="left:656.50px;top:492.00px;font-size:16px;color:#000;font-family:'Liberation Serif',serif;font-weight:bold;transform:scaleX(0.9571)">Дефинитивная стадия</div>
<div class="t" style="left:8.80px;top:97.00px;font-size:10px;color:#626262">1</div>
<div class="t" style="left:8.80px;top:167.00px;font-size:10px;color:#626262">2</div>
<div class="t" style="left:8.80px;top:238.00px;font-size:10px;color:#c55a3c">3</div>
<div class="t" style="left:8.80px;top:308.00px;font-size:10px;color:#626262">4</div>
<div class="t" style="left:8.80px;top:379.00px;font-size:10px;color:#626262">5</div>
<div class="t" style="left:8.80px;top:449.00px;font-size:10px;color:#626262">6</div>
<div class="t" style="left:8.80px;top:520.00px;font-size:10px;color:#626262">7</div>
<div class="t" style="left:60.20px;top:114.90px;font-size:5.2px;color:#1e2e40;font-weight:bold;transform:scaleX(0.9182)">Морфофункциональные</div>
<div class="t" style="left:62.70px;top:120.90px;font-size:5.2px;color:#1e2e40;font-weight:bold;transform:scaleX(0.9164)">особенности полового</div>
<div class="t" style="left:76.00px;top:126.90px;font-size:5.2px;color:#1e2e40;font-weight:bold;transform:scaleX(0.8986)">созревания</div>
<div class="t" style="left:111.00px;top:138.60px;font-size:1.8px;color:#666;transform:scaleX(0.7975)">Выполнила:</div>
<div class="t" style="left:104.00px;top:140.60px;font-size:1.8px;color:#666;transform:scaleX(0.7967)">студент_группы_курса</div>
<div class="t" style="left:116.50px;top:144.60px;font-size:1.8px;color:#666;transform:scaleX(0.7385)">ФИО</div>
<div class="t" style="left:64.00px;top:176.70px;font-size:3.6px;color:#222;font-weight:bold;transform:scaleX(0.9861)">Оглавление</div>
<div class="t" style="left:35.10px;top:189.10px;font-size:2.8px;color:#555;transform:scaleX(1.1133)">1.</div>
<div class="t" style="left:39.00px;top:189.10px;font-size:2.8px;color:#555;transform:scaleX(0.8784)">Стадии полового созревания</div>
<div class="t" style="left:35.10px;top:194.10px;font-size:2.8px;color:#555;transform:scaleX(1.1133)">2.</div>
<div class="t" style="left:39.00px;top:194.10px;font-size:2.8px;color:#555;transform:scaleX(0.8701)">Стадия инфантилизма</div>
<div class="t" style="left:35.10px;top:198.10px;font-size:2.8px;color:#555;transform:scaleX(1.1133)">3.</div>
<div class="t" style="left:39.00px;top:198.10px;font-size:2.8px;color:#555;transform:scaleX(0.8607)">Гипофизарная стадия</div>
<div class="t" style="left:35.10px;top:202.10px;font-size:2.8px;color:#555;transform:scaleX(1.1133)">4.</div>
<div class="t" style="left:39.00px;top:202.10px;font-size:2.8px;color:#555;transform:scaleX(0.8816)">Стадия активации гонад</div>
<div class="t" style="left:35.10px;top:206.10px;font-size:2.8px;color:#555;transform:scaleX(1.1133)">5.</div>
<div class="t" style="left:39.00px;top:206.10px;font-size:2.8px;color:#555;transform:scaleX(0.8857)">Максимальный старитогенез</div>
<div class="t" style="left:35.10px;top:210.10px;font-size:2.8px;color:#555;transform:scaleX(1.1133)">6.</div>
<div class="t" style="left:39.00px;top:210.10px;font-size:2.8px;color:#555;transform:scaleX(0.8595)">Дефинитивная стадия</div>
<div class="t" style="left:35.10px;top:215.10px;font-size:2.8px;color:#555;transform:scaleX(1.1133)">7.</div>
<div class="t" style="left:39.00px;top:215.10px;font-size:2.8px;color:#555;transform:scaleX(0.8660)">Список литературы</div>
<div class="t" style="left:49.10px;top:246.73px;font-size:3.54px;color:#222;font-weight:bold;transform:scaleX(0.9892)">Стадии полового созревания</div>
<div class="t" style="left:33.10px;top:261.71px;font-size:2.58px;color:#555;transform:scaleX(1.0124)">Выделяют 5 стадий полового</div>
<div class="t" style="left:33.10px;top:264.71px;font-size:2.58px;color:#555;transform:scaleX(1.0072)">созревания: стадия</div>
<div class="t" style="left:33.10px;top:268.71px;font-size:2.58px;color:#555">инфантилизма, гипофизарная</div>
<div class="t" style="left:33.10px;top:272.71px;font-size:2.58px;color:#555;transform:scaleX(1.0061)">стадия, стадия активации гонад,</div>
<div class="t" style="left:33.10px;top:276.71px;font-size:2.58px;color:#555;transform:scaleX(1.0171)">максимальный старитогенез и</div>
<div class="t" style="left:33.10px;top:279.71px;font-size:2.58px;color:#555;transform:scaleX(0.9899)">дефинитивная стадия.</div>
<div class="t" style="left:31.26px;top:261.79px;font-size:2.42px;color:#555">•</div>
<div class="t" style="left:84.16px;top:258.80px;font-size:2.4px;color:#111;font-family:'Liberation Serif',serif;font-weight:bold;transform:scaleX(0.7593)">Стадия инфантилизма</div>
<div class="t" style="left:84.44px;top:265.80px;font-size:2.4px;color:#111;font-family:'Liberation Serif',serif;font-weight:bold;transform:scaleX(0.7628)">Гипофизарная стадия</div>
<div class="t" style="left:83.27px;top:271.80px;font-size:2.4px;color:#111;font-family:'Liberation Serif',serif;font-weight:bold;transform:scaleX(0.7583)">Стадия активации гонад</div>
<div class="t" style="left:81.28px;top:278.80px;font-size:2.4px;color:#111;font-family:'Liberation Serif',serif;font-weight:bold;transform:scaleX(0.7649)">Максимальный старитогенез</div>
<div class="t" style="left:84.22px;top:284.80px;font-size:2.4px;color:#111;font-family:'Liberation Serif',serif;font-weight:bold;transform:scaleX(0.7657)">Дефинитивная стадия</div>
<div class="t" style="left:54.60px;top:316.70px;font-size:3.6px;color:#222;font-weight:bold;transform:scaleX(0.9834)">Стадия инфантилизма</div>
<div class="t" style="left:35.00px;top:330.65px;font-size:2.7px;color:#444">•</div>
<div class="t" style="left:37.00px;top:330.65px;font-size:2.7px;color:#444;transform:scaleX(0.9543)">на этой стадии репродуктивная система развивается медленно</div>
<div class="t" style="left:37.00px;top:334.65px;font-size:2.7px;color:#444;transform:scaleX(0.9212)">и физически незаметно эндокринная регуляция осуществляется</div>
<div class="t" style="left:37.00px;top:337.65px;font-size:2.7px;color:#444;transform:scaleX(0.8846)">гормонами щитовидной железы и соматотропным гормоном гипофиза</div>
<div class="t" style="left:37.00px;top:340.65px;font-size:2.7px;color:#444;transform:scaleX(0.8734)">половые органы в это время претерпевают незначительные</div>
<div class="t" style="left:37.00px;top:344.65px;font-size:2.7px;color:#444;transform:scaleX(0.8076)">изменения вторичные признаки на этой стадии репродуктивная</div>
<div class="t" style="left:37.00px;top:347.65px;font-size:2.7px;color:#444;transform:scaleX(0.5808)">система развивается</div>
<div class="t" style="left:35.00px;top:352.65px;font-size:2.7px;color:#444">•</div>
<div class="t" style="left:37.00px;top:352.65px;font-size:2.7px;color:#444;transform:scaleX(0.8104)">медленно и физически незаметно эндокринная регуляция осуществляется</div>
<div class="t" style="left:37.00px;top:355.65px;font-size:2.7px;color:#444;transform:scaleX(0.6010)">гормонами</div>
<div class="t" style="left:55.15px;top:387.70px;font-size:3.6px;color:#222;font-weight:bold;transform:scaleX(0.9801)">Гипофизарная стадия</div>
<div class="t" style="left:35.20px;top:401.65px;font-size:2.7px;color:#444">•</div>
<div class="t" style="left:37.40px;top:401.65px;font-size:2.7px;color:#444;transform:scaleX(0.9445)">щитовидной железы и соматотропным гормоном гипофиза</div>
<div class="t" style="left:37.40px;top:404.65px;font-size:2.7px;color:#444;transform:scaleX(0.8446)">половые органы в это время претерпевают незначительные изменения</div>
<div class="t" style="left:37.40px;top:409.65px;font-size:2.7px;color:#444;transform:scaleX(0.8262)">вторичные признаки на этой стадии репродуктивная система развивается</div>
<div class="t" style="left:37.40px;top:412.65px;font-size:2.7px;color:#444;transform:scaleX(0.9398)">медленно и физически незаметно эндокринная регуляция</div>
<div class="t" style="left:35.20px;top:417.65px;font-size:2.7px;color:#444">•</div>
<div class="t" style="left:37.40px;top:417.65px;font-size:2.7px;color:#444;transform:scaleX(0.8985)">осуществляется гормонами щитовидной железы и соматотропным</div>
<div class="t" style="left:37.40px;top:420.65px;font-size:2.7px;color:#444;transform:scaleX(0.6427)">гормоном</div>
<div class="t" style="left:52.75px;top:457.70px;font-size:3.6px;color:#222;font-weight:bold;transform:scaleX(0.9962)">Стадия активации гонад</div>
<div class="t" style="left:35.00px;top:470.75px;font-size:2.5px;color:#444">•</div>
<div class="t" style="left:36.70px;top:470.75px;font-size:2.5px;color:#444;transform:scaleX(0.9168)">гипофиза половые органы в это время претерпевают незначительные</div>
<div class="t" style="left:36.70px;top:473.75px;font-size:2.5px;color:#444;transform:scaleX(0.9435)">изменения вторичные признаки на этой стадии репродуктивная</div>
<div class="t" style="left:36.70px;top:475.75px;font-size:2.5px;color:#444;transform:scaleX(0.9019)">система развивается медленно и физически незаметно</div>
<div class="t" style="left:35.00px;top:478.75px;font-size:2.5px;color:#444">•</div>
<div class="t" style="left:36.70px;top:478.75px;font-size:2.5px;color:#444;transform:scaleX(0.8982)">эндокринная регуляция осуществляется гормонами щитовидной железы</div>
<div class="t" style="left:36.70px;top:481.75px;font-size:2.5px;color:#444;transform:scaleX(0.9679)">и соматотропным гормоном гипофиза половые органы в это время</div>
<div class="t" style="left:36.70px;top:484.75px;font-size:2.5px;color:#444;transform:scaleX(0.5321)">претерпевают</div>
<div class="t" style="left:35.00px;top:487.75px;font-size:2.5px;color:#444">•</div>
<div class="t" style="left:36.70px;top:487.75px;font-size:2.5px;color:#444;transform:scaleX(0.9655)">незначительные изменения вторичные признаки</div>
<div class="t" style="left:35.00px;top:491.75px;font-size:2.5px;color:#444">•</div>
<div class="t" style="left:36.70px;top:491.75px;font-size:2.5px;color:#444;transform:scaleX(0.8641)">на этой стадии репродуктивная система развивается медленно и физически</div>
<div class="t" style="left:36.70px;top:493.75px;font-size:2.5px;color:#444;transform:scaleX(0.8571)">незаметно эндокринная регуляция осуществляется гормонами щитовидной</div>
<div class="t" style="left:36.70px;top:496.75px;font-size:2.5px;color:#444">железы</div>
<div class="t" style="left:32.70px;top:531.65px;font-size:2.7px;color:#3a3a3a">•</div>
<div class="t" style="left:34.15px;top:531.65px;font-size:2.7px;color:#3a3a3a;transform:scaleX(0.9464)">и соматотропным гормоном гипофиза половые</div>
<div class="t" style="left:34.15px;top:535.65px;font-size:2.7px;color:#3a3a3a;transform:scaleX(0.9369)">органы в это время претерпевают незначительные</div>
<div class="t" style="left:34.15px;top:538.65px;font-size:2.7px;color:#3a3a3a;transform:scaleX(0.9358)">изменения вторичные признаки на этой стадии</div>
<div class="t" style="left:34.15px;top:541.65px;font-size:2.7px;color:#3a3a3a;transform:scaleX(0.9541)">репродуктивная система развивается медленно и</div>
<div class="t" style="left:34.15px;top:544.65px;font-size:2.7px;color:#3a3a3a;transform:scaleX(0.7832)">физически незаметно эндокринная</div>
<div class="t" style="left:32.70px;top:548.65px;font-size:2.7px;color:#3a3a3a">•</div>
<div class="t" style="left:34.15px;top:548.65px;font-size:2.7px;color:#3a3a3a;transform:scaleX(0.9550)">регуляция осуществляется гормонами щитовидной</div>
<div class="t" style="left:34.15px;top:552.65px;font-size:2.7px;color:#3a3a3a;transform:scaleX(0.8943)">железы и соматотропным гормоном гипофиза половые</div>
<div class="t" style="left:34.15px;top:555.65px;font-size:2.7px;color:#3a3a3a;transform:scaleX(0.7324)">органы в это время претерпевают</div>
<div class="t" style="left:32.70px;top:559.65px;font-size:2.7px;color:#3a3a3a">•</div>
<div class="t" style="left:34.15px;top:559.65px;font-size:2.7px;color:#3a3a3a;transform:scaleX(0.9071)">незначительные изменения вторичные признаки</div>
<div class="t" style="left:34.15px;top:563.65px;font-size:2.7px;color:#3a3a3a;transform:scaleX(0.8225)">на этой стадии репродуктивная система развивается</div>
<div class="t" style="left:34.15px;top:566.65px;font-size:2.7px;color:#3a3a3a;transform:scaleX(0.7689)">медленно и физически незаметно</div>
<div class="t" style="left:329.00px;top:32.00px;font-size:10px;color:#b5b5b5;transform:scaleX(1.1993)">A</div>
<div class="t" style="left:345.00px;top:33.25px;font-size:8.5px;color:#b5b5b5;transform:scaleX(1.2346)">A</div>
<div class="t" style="left:195.00px;top:52.25px;font-size:9.5px;color:#b5b5b5;font-weight:bold;transform:scaleX(1.1645)">Ж</div>
<div class="t" style="left:212.00px;top:52.25px;font-size:9.5px;color:#b5b5b5;font-weight:bold;transform:scaleX(1.1208);font-style:italic">К</div>
<div class="t" style="left:228.50px;top:52.25px;font-size:9.5px;color:#b5b5b5;transform:scaleX(1.0265)">Ч</div>
<div class="t" style="left:244.00px;top:52.25px;font-size:9.5px;color:#b5b5b5;font-weight:bold;transform:scaleX(1.0258)">S</div>
<div class="t" style="left:257.00px;top:54.50px;font-size:7px;color:#b5b5b5;transform:scaleX(1.0189)">abc</div>
<div class="t" style="left:274.00px;top:52.50px;font-size:7px;color:#b5b5b5;transform:scaleX(1.0205)">AV</div>
<div class="t" style="left:298.00px;top:53.00px;font-size:9px;color:#b5b5b5;transform:scaleX(1.0445)">Aa</div>
<div class="t" style="left:354.00px;top:52.00px;font-size:10px;color:#b5b5b5;transform:scaleX(1.0494)">A</div>
</body></html>
